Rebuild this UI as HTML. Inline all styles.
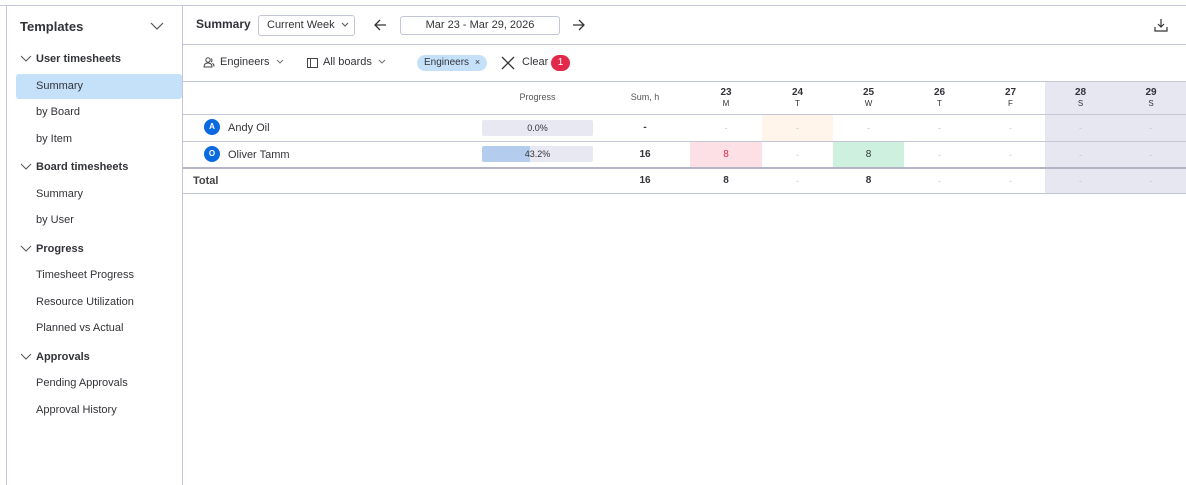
<!DOCTYPE html>
<html><head><meta charset="utf-8"><style>
*{box-sizing:border-box;margin:0;padding:0}
body{width:1186px;height:485px;background:#fff;font-family:"Liberation Sans",sans-serif;color:#323338;position:relative;overflow:hidden;font-size:11px}
.a{position:absolute}
.hl{position:absolute;height:1px;background:#c3c6d4}
.vl{position:absolute;width:1px;background:#c3c6d4}
.sec{position:absolute;left:20px;font-weight:bold;font-size:11px;color:#323338}
.sec svg{position:absolute;left:0;top:2px}
.sec span{position:absolute;left:16px;white-space:nowrap}
.it{position:absolute;left:36px;font-size:11px;white-space:nowrap}
.c{position:absolute;text-align:center;font-size:10px}
.dash{color:#c5c7d0;font-size:9px}
</style></head><body>
<div class="hl" style="left:0;top:5px;width:1186px"></div>
<div class="vl" style="left:6px;top:5px;height:480px"></div>
<div class="vl" style="left:182px;top:5px;height:480px"></div>
<div class="hl" style="left:183px;top:44px;width:1003px"></div>
<div class="hl" style="left:183px;top:81px;width:1003px"></div>

<!-- sidebar -->
<div class="a" style="left:20px;top:19px;font-weight:bold;font-size:13px">Templates</div>
<svg class="a" style="left:150px;top:22px" width="14" height="9"><path d="M1 1l6 6 6-6" fill="none" stroke="#555" stroke-width="1.2"/></svg>
<div class="a" style="left:16px;top:74px;width:166px;height:25px;background:#c5e1fa;border-radius:3px"></div>
<div class="sec" style="top:53px"><svg width="12" height="8"><path d="M1 1l5 5 5-5" fill="none" stroke="#555" stroke-width="1"/></svg><span>User timesheets</span></div>
<div class="it" style="top:80px">Summary</div>
<div class="it" style="top:106px">by Board</div>
<div class="it" style="top:133px">by Item</div>
<div class="sec" style="top:161px"><svg width="12" height="8"><path d="M1 1l5 5 5-5" fill="none" stroke="#555" stroke-width="1"/></svg><span>Board timesheets</span></div>
<div class="it" style="top:188px">Summary</div>
<div class="it" style="top:214px">by User</div>
<div class="sec" style="top:243px"><svg width="12" height="8"><path d="M1 1l5 5 5-5" fill="none" stroke="#555" stroke-width="1"/></svg><span>Progress</span></div>
<div class="it" style="top:269px">Timesheet Progress</div>
<div class="it" style="top:296px">Resource Utilization</div>
<div class="it" style="top:322px">Planned vs Actual</div>
<div class="sec" style="top:351px"><svg width="12" height="8"><path d="M1 1l5 5 5-5" fill="none" stroke="#555" stroke-width="1"/></svg><span>Approvals</span></div>
<div class="it" style="top:377px">Pending Approvals</div>
<div class="it" style="top:404px">Approval History</div>

<!-- header -->
<div class="a" style="left:196px;top:17px;font-weight:bold;font-size:12px">Summary</div>
<div class="a" style="left:258px;top:15px;width:97px;height:21px;border:1px solid #c3c6d4;border-radius:3px;font-size:11px;padding:3px 0 0 8px">Current Week <svg width="8" height="6" style="margin-left:3px"><path d="M1 1l3 3 3-3" fill="none" stroke="#555"/></svg></div>
<svg class="a" style="left:373px;top:18px" width="14" height="14"><path d="M13 7H2M7 2L2 7l5 5" fill="none" stroke="#333" stroke-width="1.3"/></svg>
<div class="a" style="left:400px;top:16px;width:160px;height:19px;border:1px solid #c3c6d4;border-radius:3px;font-size:11px;text-align:center;padding-top:2px">Mar 23 - Mar 29, 2026</div>
<svg class="a" style="left:572px;top:18px" width="14" height="14"><path d="M1 7h11M7 2l5 5-5 5" fill="none" stroke="#333" stroke-width="1.3"/></svg>
<svg class="a" style="left:1154px;top:18px" width="14" height="14"><path d="M7 1v8M4 6l3 3 3-3M1 9v4h12V9" fill="none" stroke="#333" stroke-width="1.2"/></svg>

<!-- filters -->
<svg class="a" style="left:203px;top:57px" width="12" height="11"><circle cx="5" cy="3" r="2.2" fill="none" stroke="#444"/><path d="M1 10c0-3 2-4 4-4s4 1 4 4zM8 1.5a2 2 0 010 3.5M9.5 6.5c1 .5 1.5 1.5 1.5 3" fill="none" stroke="#444"/></svg>
<div class="a" style="left:220px;top:56px;font-size:11px">Engineers <svg width="8" height="6" style="margin-left:3px"><path d="M1 1l3 3 3-3" fill="none" stroke="#777"/></svg></div>
<svg class="a" style="left:307px;top:57px" width="11" height="11"><rect x=".5" y="1.5" width="10" height="9" fill="none" stroke="#444"/><path d="M3.5 1.5v9" stroke="#444"/></svg>
<div class="a" style="left:323px;top:56px;font-size:11px">All boards <svg width="8" height="6" style="margin-left:3px"><path d="M1 1l3 3 3-3" fill="none" stroke="#777"/></svg></div>
<div class="a" style="left:417px;top:55px;width:70px;height:16px;background:#c5e1fa;border-radius:8px;font-size:10px;padding:2px 0 0 7px">Engineers <span style="margin-left:3px;font-size:9px">×</span></div>
<svg class="a" style="left:501px;top:56px" width="14" height="14"><path d="M1 1l12 12M13 1L1 13" stroke="#333" stroke-width="1.3"/></svg>
<div class="a" style="left:522px;top:56px;font-size:11px">Clear</div>
<div class="a" style="left:551px;top:55px;width:19px;height:16px;background:#e2294b;border-radius:8px;color:#fff;font-size:10px;text-align:center;padding-top:2px">1</div>

<!-- table -->
<div class="a" style="left:1045px;top:82px;width:141px;height:111px;background:#e7e7f2"></div>
<div class="a" style="left:762px;top:115px;width:71px;height:26px;background:#fff5ea"></div>
<div class="a" style="left:690px;top:142px;width:72px;height:25px;background:#fde0e5"></div>
<div class="a" style="left:833px;top:142px;width:71px;height:25px;background:#cdf1de"></div>
<div class="hl" style="left:183px;top:114px;width:1003px"></div>
<div class="hl" style="left:183px;top:141px;width:1003px"></div>
<div class="hl" style="left:183px;top:167px;width:1003px;height:2px;background:#b3b5c4"></div>
<div class="hl" style="left:183px;top:193px;width:1003px"></div>

<div class="c" style="left:482px;width:111px;top:92px;font-size:9px;color:#555">Progress</div>
<div class="c" style="left:600px;width:90px;top:92px;font-size:9px;color:#555">Sum, h</div>

<div class="a" style="left:482px;top:120px;width:111px;height:16px;background:#e8e8f3;border-radius:2px"></div>
<div class="a" style="left:482px;top:146px;width:111px;height:16px;background:#e8e8f3;border-radius:2px"></div>
<div class="a" style="left:482px;top:146px;width:48px;height:16px;background:#b4cdee;border-radius:2px 0 0 2px"></div>
<div class="c" style="left:482px;width:111px;top:123px;font-size:9px">0.0%</div>
<div class="c" style="left:482px;width:111px;top:149px;font-size:9px">43.2%</div>

<div class="a" style="left:204px;top:119px;width:16px;height:16px;border-radius:50%;background:#0b6ae0;color:#fff;font-size:8px;font-weight:bold;text-align:center;padding-top:3px">A</div>
<div class="a" style="left:228px;top:122px;font-size:11px">Andy Oil</div>
<div class="a" style="left:204px;top:146px;width:16px;height:16px;border-radius:50%;background:#0b6ae0;color:#fff;font-size:8px;font-weight:bold;text-align:center;padding-top:3px">O</div>
<div class="a" style="left:228px;top:149px;font-size:11px">Oliver Tamm</div>
<div class="a" style="left:193px;top:175px;font-size:11px;font-weight:bold;color:#444">Total</div>

<div class="c" style="left:600px;width:90px;top:122px;font-weight:bold">-</div>
<div class="c" style="left:600px;width:90px;top:149px;font-weight:bold">16</div>
<div class="c" style="left:600px;width:90px;top:175px;font-weight:bold">16</div>

<!-- day columns -->
<div class="c" style="left:690px;width:72px;top:87px;font-weight:bold">23<br><span style="font-weight:normal;font-size:8px">M</span></div>
<div class="c" style="left:762px;width:71px;top:87px;font-weight:bold">24<br><span style="font-weight:normal;font-size:8px">T</span></div>
<div class="c" style="left:833px;width:71px;top:87px;font-weight:bold">25<br><span style="font-weight:normal;font-size:8px">W</span></div>
<div class="c" style="left:904px;width:71px;top:87px;font-weight:bold">26<br><span style="font-weight:normal;font-size:8px">T</span></div>
<div class="c" style="left:975px;width:71px;top:87px;font-weight:bold">27<br><span style="font-weight:normal;font-size:8px">F</span></div>
<div class="c" style="left:1045px;width:71px;top:87px;font-weight:bold">28<br><span style="font-weight:normal;font-size:8px">S</span></div>
<div class="c" style="left:1116px;width:70px;top:87px;font-weight:bold">29<br><span style="font-weight:normal;font-size:8px">S</span></div>

<!-- row 1 -->
<div class="c dash" style="left:690px;width:72px;top:123px">-</div>
<div class="c dash" style="left:762px;width:71px;top:123px">-</div>
<div class="c dash" style="left:833px;width:71px;top:123px">-</div>
<div class="c dash" style="left:904px;width:71px;top:123px">-</div>
<div class="c dash" style="left:975px;width:71px;top:123px">-</div>
<div class="c dash" style="left:1045px;width:71px;top:123px">-</div>
<div class="c dash" style="left:1116px;width:70px;top:123px">-</div>
<!-- row 2 -->
<div class="c" style="left:690px;width:72px;top:149px;color:#e2294b">8</div>
<div class="c dash" style="left:762px;width:71px;top:150px">-</div>
<div class="c" style="left:833px;width:71px;top:149px">8</div>
<div class="c dash" style="left:904px;width:71px;top:150px">-</div>
<div class="c dash" style="left:975px;width:71px;top:150px">-</div>
<div class="c dash" style="left:1045px;width:71px;top:150px">-</div>
<div class="c dash" style="left:1116px;width:70px;top:150px">-</div>
<!-- total -->
<div class="c" style="left:690px;width:72px;top:175px;font-weight:bold">8</div>
<div class="c dash" style="left:762px;width:71px;top:176px">-</div>
<div class="c" style="left:833px;width:71px;top:175px;font-weight:bold">8</div>
<div class="c dash" style="left:904px;width:71px;top:176px">-</div>
<div class="c dash" style="left:975px;width:71px;top:176px">-</div>
<div class="c dash" style="left:1045px;width:71px;top:176px">-</div>
<div class="c dash" style="left:1116px;width:70px;top:176px">-</div>
</body></html>
